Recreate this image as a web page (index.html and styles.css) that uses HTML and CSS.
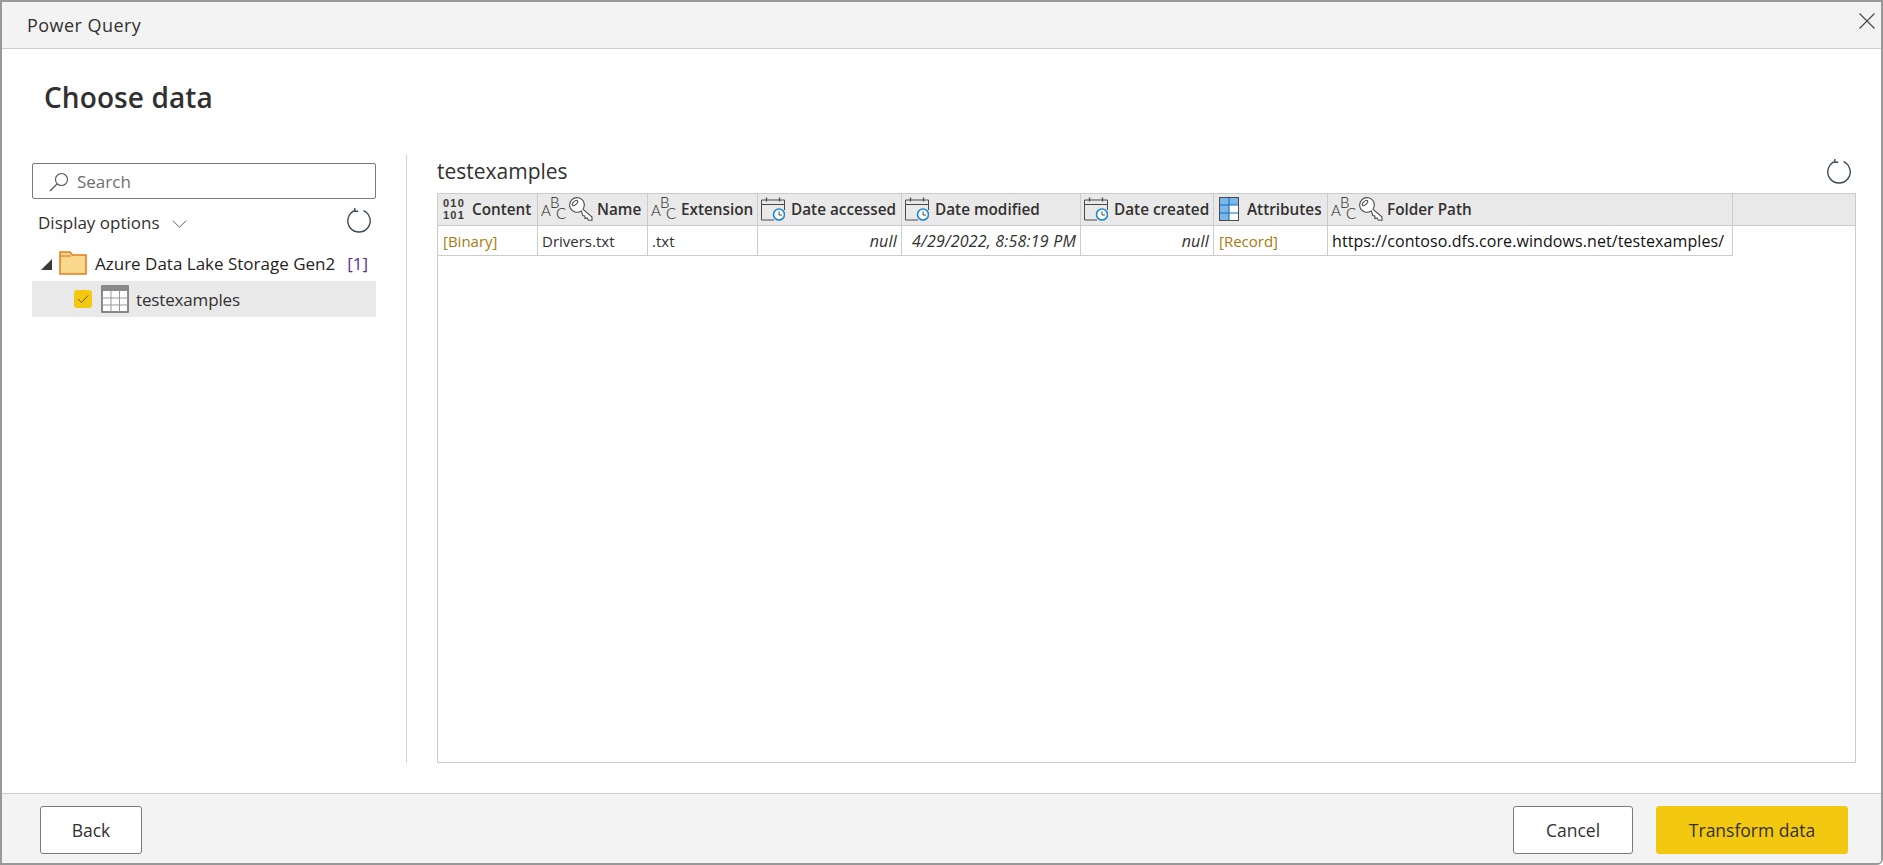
FILE: index.html
```html
<!DOCTYPE html>
<html>
<head>
    <meta charset="UTF-8">
    <title>Power Query</title>
    <link rel="stylesheet" href="styles.css">
</head>
<body>
    <svg class="icon-defs" width="0" height="0">
        <symbol id="refresh" viewBox="0 0 26 26">
            <path d="M17.5 3.6A11.2 11.2 0 1 1 8.5 3.6" fill="none" stroke="#3d4a55" stroke-width="1.4"/>
            <path d="M8.8 .9V4.2H12.2" fill="none" stroke="#3d4a55" stroke-width="1.4"/>
        </symbol>
        <symbol id="key" viewBox="0 0 24 24">
            <path d="M13.9 12.2L23 20V23.2H19.5L18 21 16 21.500 15.800 19 13.800 18.500 12.200 13.900A7.300 7.300 0 1 1 13.900 12.200Z" fill="#fff" stroke="#4a4a4a" stroke-width="1.100"/>
            <ellipse cx="6" cy="6" rx="3.400" ry="1.700" transform="rotate(-45 6 6)" fill="#fff" stroke="#4a4a4a" stroke-width="1"/>
        </symbol>
        <symbol id="calendar" viewBox="0 0 24 24">
            <path d="M.5 3H23.500V13M13 23H.5V3M.5 7.500H23.500" fill="none" stroke="#4a4a4a" stroke-width="1"/>
            <path d="M5.500 .5V4.500M18.500 .5V4.500" stroke="#4a4a4a" stroke-width="1.300"/>
            <circle cx="18" cy="17.500" r="5.500" fill="#fff" stroke="#1e88d2" stroke-width="1.600"/>
            <path d="M18 14.500V18H21" fill="none" stroke="#3d4a55" stroke-width="1"/>
        </symbol>
        <symbol id="record" viewBox="0 0 20 24">
            <rect x=".5" y=".5" width="19" height="23" fill="#fff" stroke="#4a4a4a"/>
            <rect x="1" y="1" width="9" height="22" fill="#7cb6e8"/>
            <rect x="10" y="1" width="9" height="7" fill="#7cb6e8"/>
            <path d="M10 1V23M1 8H19M1 16H19" stroke="#0f6cbd" stroke-width="1.100"/>
        </symbol>
    </svg>

    <div class="dialog">
        <div class="title-bar">
            <span class="app-name">Power Query</span>
            <svg class="close-icon" viewBox="0 0 16 16"><path d="M.5 .5L15.500 15.500M15.500 .5L.5 15.500" stroke="#444" stroke-width="1.100"/></svg>
        </div>

        <h1 class="page-title">Choose data</h1>

        <div class="main">
            <div class="side-panel">
                <div class="search-box">
                    <svg class="search-icon" viewBox="0 0 20 20"><circle cx="12.500" cy="7.500" r="6" fill="none" stroke="#555" stroke-width="1.100"/><path d="M8 12L1 19" stroke="#555" stroke-width="1.300"/></svg>
                    <span>Search</span>
                </div>
                <div class="display-row">
                    <span class="display-options">Display options</span>
                    <svg class="chevron" viewBox="0 0 16 10"><path d="M1 1.500L8 8.500L15 1.500" fill="none" stroke="#555" stroke-width="1"/></svg>
                    <svg class="refresh refresh-side"><use href="#refresh"/></svg>
                </div>
                <div class="tree-row">
                    <span class="expander"></span>
                    <svg class="folder-icon" width="28" height="24" viewBox="0 0 28 24">
                        <path d="M1 23V1H11L13.500 4H27V23Z" fill="#f8d98d" stroke="#e8791c" stroke-width="1.500"/>
                        <path d="M1 5H12" stroke="#e8791c" stroke-width="1.200"/>
                    </svg>
                    <span class="tree-label">Azure Data Lake Storage Gen2</span>
                    <span class="tree-count">[1]</span>
                </div>
                <div class="tree-row tree-child">
                    <span class="checkbox">
                        <svg viewBox="0 0 12 10"><path d="M1 5L4.500 8.500L11 1.500" fill="none" stroke="#6b5a10" stroke-width="1"/></svg>
                    </span>
                    <svg class="table-icon" width="28" height="28" viewBox="0 0 28 28">
                        <rect x="1" y="1" width="26" height="26" fill="#fff" stroke="#666" stroke-width="1.500"/>
                        <rect x="1" y="1" width="26" height="5" fill="#8a8a8a"/>
                        <path d="M10 6V27M18.500 6V27M1 13H27M1 20H27" stroke="#999" stroke-width="1"/>
                    </svg>
                    <span class="tree-name">testexamples</span>
                </div>
            </div>

            <div class="preview">
                <div class="preview-head">
                    <span class="preview-title">testexamples</span>
                    <svg class="refresh"><use href="#refresh"/></svg>
                </div>
                <div class="data-table">
                    <div class="table-grid">
                        <div class="th"><span class="binary-icon">010<br>101</span><span>Content</span></div>
                        <div class="th">
                            <svg class="type-icon" viewBox="0 0 24 24"><text class="abc-text" x="0" y="19">A</text><text class="abc-text" x="9" y="11">B</text><text class="abc-text" x="15" y="22">C</text></svg>
                            <svg class="type-icon"><use href="#key"/></svg>
                            <span>Name</span>
                        </div>
                        <div class="th th-wide">
                            <svg class="type-icon" viewBox="0 0 24 24"><text class="abc-text" x="0" y="19">A</text><text class="abc-text" x="9" y="11">B</text><text class="abc-text" x="15" y="22">C</text></svg>
                            <span>Extension</span>
                        </div>
                        <div class="th th-wide"><svg class="type-icon"><use href="#calendar"/></svg><span>Date accessed</span></div>
                        <div class="th th-wide"><svg class="type-icon"><use href="#calendar"/></svg><span>Date modified</span></div>
                        <div class="th th-wide"><svg class="type-icon"><use href="#calendar"/></svg><span>Date created</span></div>
                        <div class="th th-record"><svg class="type-icon record-icon"><use href="#record"/></svg><span>Attributes</span></div>
                        <div class="th">
                            <svg class="type-icon" viewBox="0 0 24 24"><text class="abc-text" x="0" y="19">A</text><text class="abc-text" x="9" y="11">B</text><text class="abc-text" x="15" y="22">C</text></svg>
                            <svg class="type-icon"><use href="#key"/></svg>
                            <span>Folder Path</span>
                        </div>
                        <div class="th th-filler"></div>

                        <div class="td link-value">[Binary]</div>
                        <div class="td">Drivers.txt</div>
                        <div class="td">.txt</div>
                        <div class="td date-value">null</div>
                        <div class="td date-value">4/29/2022, 8:58:19 PM</div>
                        <div class="td date-value">null</div>
                        <div class="td link-value">[Record]</div>
                        <div class="td url-value">https://contoso.dfs.core.windows.net/testexamples/</div>
                    </div>
                </div>
            </div>
        </div>

        <div class="footer">
            <button class="btn btn-back">Back</button>
            <div class="footer-right">
                <button class="btn btn-cancel">Cancel</button>
                <button class="btn btn-primary">Transform data</button>
            </div>
        </div>
    </div>
</body>
</html>
```

FILE: styles.css
```css
* {
    box-sizing: border-box;
}

body {
    margin: 0;
    padding: 0;
    background-color: #ffffff;
    color: #323130;
    font-family: "Open Sans", "Noto Sans", sans-serif;
}

.icon-defs {
    display: block;
    height: 0;
}

.abc-text {
    font-family: Lato, sans-serif;
    font-size: 15px;
    font-weight: 300;
    fill: #252423;
}

.dialog {
    display: flex;
    flex-direction: column;
    height: 865px;
    border: 2px solid #999999;
    border-bottom-right-radius: 6px;
    overflow: hidden;
}

.title-bar {
    display: flex;
    align-items: center;
    justify-content: space-between;
    flex: none;
    height: 47px;
    padding: 0 6px 0 25px;
    background-color: #f3f3f3;
    border-bottom: 1px solid #cccccc;
}

.app-name {
    font-size: 18px;
    font-weight: 500;
    letter-spacing: 0.45px;
}

.close-icon {
    width: 16px;
    height: 16px;
    margin-bottom: 9px;
}

.page-title {
    flex: none;
    margin: 0;
    height: 106px;
    padding: 28px 0 0 42px;
    font-size: 28px;
    line-height: 40px;
    font-weight: 600;
    letter-spacing: 0.1px;
}

.main {
    display: flex;
    flex: 1;
    min-height: 0;
    padding-bottom: 30px;
}

.side-panel {
    flex: none;
    width: 374px;
    margin-left: 30px;
    padding-top: 8px;
    padding-right: 30px;
}

.search-box {
    display: flex;
    align-items: center;
    gap: 8px;
    height: 36px;
    padding-left: 16px;
    padding-top: 1px;
    border: 1px solid #7a7a7a;
    border-radius: 2px;
    font-size: 17px;
    color: #6f6f6f;
}

.search-icon {
    width: 20px;
    height: 20px;
}

.display-row {
    display: flex;
    align-items: center;
    height: 46px;
    padding-left: 6px;
    padding-right: 4px;
    font-size: 17px;
}

.chevron {
    width: 15px;
    height: 10px;
    margin-left: 12px;
    margin-top: 3px;
}

.refresh {
    width: 26px;
    height: 26px;
}

.refresh-side {
    margin-left: auto;
    margin-top: -5px;
}

.tree-row {
    display: flex;
    align-items: center;
    height: 36px;
    padding-left: 9px;
    font-size: 17px;
}

.expander {
    width: 0;
    height: 0;
    border-style: solid;
    border-width: 0 0 11px 11px;
    border-color: transparent transparent #3b3a39 transparent;
    margin-right: 7px;
    margin-top: 2px;
}

.folder-icon {
    flex: none;
    margin-right: 8px;
}

.tree-label {
    color: #252423;
}

.tree-count {
    margin-left: auto;
    margin-right: 8px;
    color: #5c2d91;
}

.tree-child {
    padding-left: 42px;
    background-color: #e9e9e9;
}

.tree-name {
    letter-spacing: -0.15px;
}

.checkbox {
    display: flex;
    align-items: center;
    justify-content: center;
    flex: none;
    width: 18px;
    height: 18px;
    margin-right: 9px;
    background-color: #f2c811;
    border-radius: 3px;
}

.checkbox svg {
    width: 12px;
    height: 10px;
}

.table-icon {
    flex: none;
    margin-right: 7px;
}

.preview {
    flex: 1;
    display: flex;
    flex-direction: column;
    min-width: 0;
    border-left: 1px solid #d0d0d0;
    padding-left: 30px;
    padding-right: 25px;
}

.preview-head {
    display: flex;
    align-items: center;
    justify-content: space-between;
    flex: none;
    height: 38px;
    padding: 0 4px 6px 0;
}

.preview-title {
    font-size: 21px;
}

.data-table {
    flex: 1;
    min-height: 0;
    border: 1px solid #cccccc;
}

.table-grid {
    display: grid;
    grid-template-columns: 100px 110px 110px 144px 179px 133px 114px 405px 1fr;
    grid-template-rows: 32px 30px;
}

.th,
.td {
    border-right: 1px solid #cccccc;
    border-bottom: 1px solid #cccccc;
    white-space: nowrap;
    overflow: hidden;
}

.th {
    display: flex;
    align-items: center;
    gap: 4px;
    padding: 0 0 1px 3px;
    background-color: #e9e9e9;
    font-size: 15.300px;
    font-weight: 550;
}

.th-wide {
    gap: 6px;
}

.th-record {
    gap: 8px;
}

.th-filler {
    border-right: none;
}

.type-icon {
    flex: none;
    width: 24px;
    height: 24px;
    overflow: visible;
}

.record-icon {
    width: 20px;
    margin-left: 2px;
}

.binary-icon {
    flex: none;
    width: 25px;
    margin-left: 2px;
    font-family: "Liberation Sans", sans-serif;
    font-size: 11px;
    line-height: 12.500px;
    letter-spacing: 1.200px;
    color: #3b3a39;
}

.td {
    padding: 0 4px;
    font-size: 15px;
    line-height: 30px;
}

.link-value {
    padding-left: 5px;
    color: #a87a10;
}

.date-value {
    text-align: right;
    font-size: 16px;
    font-style: italic;
    letter-spacing: 0.2px;
}

.url-value {
    color: #111111;
    font-size: 16px;
    letter-spacing: 0.08px;
}

.footer {
    flex: none;
    display: flex;
    align-items: flex-start;
    justify-content: space-between;
    height: 70px;
    padding: 12px 33px 0 38px;
    background-color: #f3f3f3;
    border-top: 1px solid #cccccc;
}

.footer-right {
    display: flex;
    gap: 23px;
}

.btn {
    height: 48px;
    font-family: inherit;
    font-size: 17.500px;
    color: #323130;
    background-color: #ffffff;
    border: 1px solid #7a7a7a;
    border-radius: 3px;
    padding: 0;
}

.btn-back {
    width: 102px;
}

.btn-cancel {
    width: 120px;
}

.btn-primary {
    width: 192px;
    background-color: #f2c811;
    border-color: #f2c811;
}
```
